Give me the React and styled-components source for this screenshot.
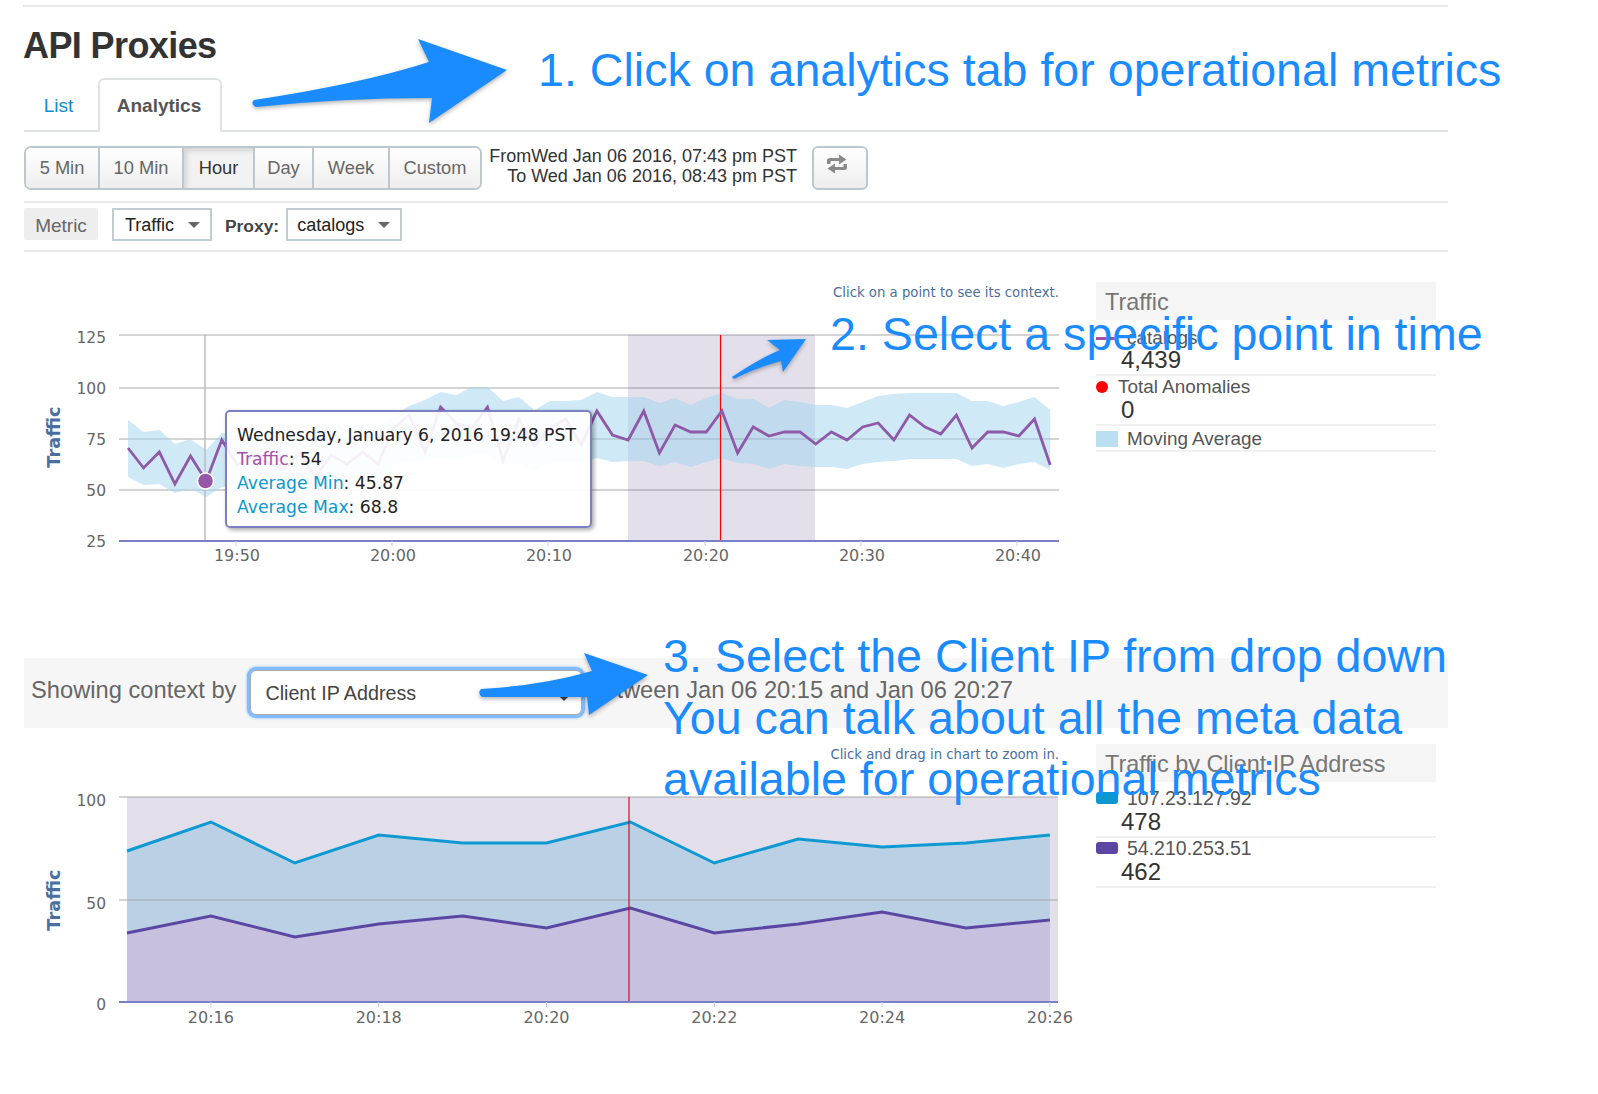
import React from 'react';
import styled, { createGlobalStyle } from 'styled-components';

const GlobalStyle = createGlobalStyle`
    html, body {
        margin: 0;
        padding: 0;
        background: #fff;
    }
    body {
        font-family: "Liberation Sans", Arial, sans-serif;
    }
`;

const Page = styled.div`
    position: relative;
    width: 1598px;
    height: 1094px;
    overflow: hidden;
`;

const Content = styled.div`
    width: 1424px;
    margin-left: 24px;
    padding-top: 5px;
`;

const Title = styled.h1`
    margin: 0;
    border-top: 2px solid #e8eaea;
    padding-top: 7px;
    margin-left: -1px;
    height: 64px;
    line-height: 63px;
    font-size: 36px;
    font-weight: 700;
    letter-spacing: -0.6px;
    color: #333;
`;

const Tabs = styled.div`
    display: flex;
    height: 52px;
    border-bottom: 2px solid #dfe2e2;
`;

const Tab = styled.div`
    box-sizing: border-box;
    height: ${(p) => (p.$active ? '54px' : '52px')};
    width: ${(p) => (p.$active ? '124px' : '74px')};
    padding-top: ${(p) => (p.$active ? '15px' : '17px')};
    padding-right: ${(p) => (p.$active ? '2px' : '5px')};
    text-align: center;
    font-size: 19px;
    font-weight: ${(p) => (p.$active ? 700 : 400)};
    color: ${(p) => (p.$active ? '#555' : '#0b8ecf')};
    background: #fff;
    border: ${(p) => (p.$active ? '2px solid #dfe2e2' : 'none')};
    border-bottom: none;
    border-radius: 6px 6px 0 0;
`;

const Toolbar = styled.div`
    display: flex;
    align-items: flex-start;
    height: 44px;
    padding: 14px 0 11px;
    border-bottom: 2px solid #e8eaea;
`;

const ButtonGroup = styled.div`
    display: flex;
    height: 44px;
    box-sizing: border-box;
    border: 2px solid #bcc8ce;
    border-radius: 7px;
    overflow: hidden;
`;

const RangeButton = styled.div`
    box-sizing: border-box;
    width: ${(p) => p.$w}px;
    line-height: 40px;
    text-align: center;
    font-size: 18.3px;
    color: ${(p) => (p.$active ? '#333' : '#666')};
    background: ${(p) => (p.$active ? '#f2f2f2' : 'linear-gradient(#fff, #eee)')};
    box-shadow: ${(p) => (p.$active ? 'inset 3px 3px 5px rgba(0,0,0,.12)' : 'none')};
    border-left: ${(p) => (p.$first ? 'none' : '2px solid #bcc8ce')};
    font-weight: ${(p) => (p.$active ? 500 : 400)};
`;

const DateRange = styled.div`
    width: 315px;
    padding-top: 1px;
    text-align: right;
    font-size: 18px;
    line-height: 19.5px;
    color: #333;
`;

const RefreshButton = styled.div`
    box-sizing: border-box;
    width: 56px;
    height: 44px;
    margin-left: 15px;
    padding: 6px 6px 0 0;
    text-align: center;
    border: 2px solid #bcc8ce;
    border-radius: 6px;
    background: linear-gradient(#fff, #eee);
`;

const FilterRow = styled.div`
    display: flex;
    align-items: flex-start;
    height: 33px;
    padding: 5px 0 9px;
    border-bottom: 2px solid #e8eaea;
`;

const MetricLabel = styled.div`
    width: 74px;
    height: 32px;
    line-height: 35px;
    text-align: center;
    font-size: 19px;
    color: #666;
    background: #eee;
    border-radius: 2px;
    margin-right: 14px;
`;

const SmallSelect = styled.div`
    box-sizing: border-box;
    display: flex;
    align-items: center;
    justify-content: space-between;
    width: ${(p) => p.$w}px;
    height: 33px;
    padding: 2px 10px 0 ${(p) => p.$left}px;
    border: 2px solid #c0cdd2;
    font-size: 18px;
    color: #222;
`;

const Caret = styled.span`
    width: 0;
    height: 0;
    margin-top: ${(p) => p.$y || 0}px;
    border-left: 6px solid transparent;
    border-right: 6px solid transparent;
    border-top: 6px solid ${(p) => p.$color || '#666'};
`;

const ProxyLabel = styled.div`
    margin: 0 7px 0 13px;
    line-height: 36px;
    font-size: 17.4px;
    font-weight: 700;
    color: #444;
`;

const ChartSection = styled.section`
    display: flex;
    height: ${(p) => p.$h}px;
    box-sizing: border-box;
    padding-top: ${(p) => p.$top}px;
`;

const ChartColumn = styled.div`
    width: 1072px;
`;

const Note = styled.div`
    height: 20px;
    line-height: 22px;
    width: 1035px;
    text-align: right;
    font-family: "DejaVu Sans", sans-serif;
    font-size: 13.25px;
    color: #4a6f9e;
`;

const ChartWrap = styled.div`
    position: relative;
`;

const ChartSvg = styled.svg`
    display: block;
    overflow: visible;
    font-family: "DejaVu Sans", sans-serif;
`;

const ChartTooltip = styled.div`
    position: absolute;
    left: 201px;
    top: 108px;
    box-sizing: border-box;
    width: 367px;
    height: 118px;
    padding: 11px 10px;
    background: rgba(255, 255, 255, 0.91);
    border: 2px solid #7b80c4;
    border-radius: 5px;
    box-shadow: 2px 2px 4px rgba(0, 0, 0, 0.35);
    font-family: "DejaVu Sans", sans-serif;
    font-size: 17.2px;
    line-height: 24px;
    color: #222;
    white-space: nowrap;
`;

const TipKey = styled.span`
    color: ${(p) => p.$color};
`;

const Legend = styled.aside`
    width: 340px;
`;

const LegendHeader = styled.div`
    height: 38px;
    line-height: 40px;
    padding-left: 9px;
    background: #f5f5f5;
    font-size: 23.4px;
    color: #777;
`;

const LegendRow = styled.div`
    padding: ${(p) => p.$top}px 0 ${(p) => p.$bottom}px;
    border-bottom: 2px solid #f0f0f0;
`;

const LegendLabel = styled.div`
    display: flex;
    align-items: center;
    height: 20px;
    font-size: ${(p) => p.$size}px;
    color: #555;
`;

const Swatch = styled.span`
    flex: none;
    width: ${(p) => p.$w}px;
    height: ${(p) => p.$h}px;
    margin-right: ${(p) => p.$gap}px;
    border-radius: ${(p) => p.$r || 0}px;
    background: ${(p) => p.$color};
`;

const LegendValue = styled.div`
    margin-top: ${(p) => p.$gap || 0}px;
    padding-left: 25px;
    height: 24px;
    line-height: 24px;
    font-size: 24px;
    color: #333;
`;

const ContextBar = styled.div`
    box-sizing: border-box;
    display: flex;
    align-items: center;
    height: 70px;
    padding: 0 0 6px 7px;
    background: #f6f6f6;
    font-size: 23.7px;
    color: #666;
    white-space: nowrap;
`;

const ClientSelect = styled.div`
    box-sizing: border-box;
    display: flex;
    align-items: center;
    justify-content: space-between;
    width: 332px;
    height: 45px;
    margin: 5px 5px 0 14px;
    padding: 2px 11px 0 14px;
    background: #fff;
    border: 1px solid #aaa;
    border-radius: 6px;
    box-shadow: 0 0 0 3px #82bbfb, 0 0 2px 4px rgba(130, 187, 251, 0.5);
    font-size: 19.7px;
    color: #444;
`;

const Overlay = styled.div`
    position: absolute;
    left: 0;
    top: 0;
    width: 1598px;
    height: 1094px;
    pointer-events: none;
`;

const Callout = styled.div`
    position: absolute;
    left: ${(p) => p.$x}px;
    top: ${(p) => p.$y}px;
    font-size: 46.6px;
    line-height: 61px;
    color: #1a8cff;
    white-space: nowrap;
`;

const ArrowSvg = styled.svg`
    position: absolute;
    left: 0;
    top: 0;
    filter: drop-shadow(0 2px 2px rgba(0, 0, 0, 0.3));
`;

const RANGES = [
    { label: '5 Min', w: 72 },
    { label: '10 Min', w: 84 },
    { label: 'Hour', w: 71, active: true },
    { label: 'Day', w: 59 },
    { label: 'Week', w: 76 },
    { label: 'Custom', w: 92 },
];

const TRAFFIC = [448, 468, 452, 484, 456, 481, 440, 465, 455, 463, 469, 453, 477, 455, 464, 452, 464, 428, 415, 452, 407, 423, 428, 407, 461, 419, 446, 428, 419, 445, 411, 435, 440, 411, 453, 425, 432, 432, 411, 453, 427, 436, 432, 432, 444, 432, 440, 427, 423, 440, 415, 427, 434, 415, 448, 432, 432, 436, 419, 465];
const AVG_TOP = [420, 432, 430, 444, 439, 450, 433, 435, 427, 432, 428, 430, 433, 423, 427, 423, 428, 415, 406, 400, 392, 395, 387, 387, 401, 397, 410, 401, 401, 400, 392, 397, 397, 397, 403, 398, 405, 398, 393, 399, 399, 408, 400, 402, 405, 405, 408, 402, 396, 394, 393, 393, 393, 393, 401, 401, 406, 402, 397, 410];
const AVG_BOTTOM = [477, 485, 484, 493, 489, 497, 487, 485, 480, 483, 480, 482, 487, 477, 478, 477, 480, 465, 462, 460, 458, 459, 455, 455, 464, 464, 471, 463, 463, 463, 458, 462, 461, 461, 466, 462, 467, 462, 458, 463, 464, 469, 464, 466, 467, 467, 469, 464, 462, 461, 459, 459, 459, 459, 466, 464, 468, 464, 462, 470];

const CLIENT_BLUE = [851, 822, 863, 835, 843, 843, 822, 863, 839, 847, 843, 835];
const CLIENT_PURPLE = [933, 916, 937, 924, 916, 928, 908, 933, 924, 912, 928, 920];

const minuteX = (i) => 128 + i * 15.63;
const contextX = (i) => 127 + i * 83.9;
const toPoints = (ys, xOf) => ys.map((y, i) => `${xOf(i).toFixed(1)},${y}`).join(' ');

function TrafficChart() {
    const band = toPoints(AVG_TOP, minuteX) + ' ' + toPoints(AVG_BOTTOM, minuteX).split(' ').reverse().join(' ');
    return (
        <ChartSvg width="1072" height="288" viewBox="24 302 1072 288">
            {[335, 388, 439, 490].map((y) => (
                <line key={y} x1="119" x2="1059" y1={y} y2={y} stroke="#c6c6c6" strokeWidth="1.6" />
            ))}
            <rect x="628" y="335" width="187" height="206" fill="#635296" opacity="0.18" />
            <polygon points={band} fill="#9fd4ee" opacity="0.5" />
            <line x1="205" x2="205" y1="335" y2="541" stroke="#bbb" strokeWidth="1.5" />
            <line x1="720.5" x2="720.5" y1="335" y2="541" stroke="#f00" strokeWidth="1.2" />
            <polyline points={toPoints(TRAFFIC, minuteX)} fill="none" stroke="#8e5aa8" strokeWidth="2.8" />
            <circle cx="205.5" cy="481" r="8" fill="#9557a8" stroke="#fff" strokeWidth="1.5" />
            <line x1="119" x2="1059" y1="541" y2="541" stroke="#7a80c8" strokeWidth="1.8" />
            {[236, 392, 548, 705, 861, 1017].map((x, i) => (
                <g key={x}>
                    <line x1={x} x2={x} y1="541" y2="546" stroke="#c5cbe8" />
                    <text x={x + 1} y="561" textAnchor="middle" fontSize="16" fill="#666">
                        {['19:50', '20:00', '20:10', '20:20', '20:30', '20:40'][i]}
                    </text>
                </g>
            ))}
            {[['125', 343], ['100', 394], ['75', 445], ['50', 496], ['25', 547]].map(([t, y]) => (
                <text key={t} x="106" y={y} textAnchor="end" fontSize="15.5" fill="#666">{t}</text>
            ))}
            <text transform="translate(60 437) rotate(-90)" textAnchor="middle" fontSize="17.8" fontWeight="700" fill="#4a6f9e">Traffic</text>
        </ChartSvg>
    );
}

function ContextChart() {
    const last = contextX(11).toFixed(1);
    const blueArea = `127,1002 ${toPoints(CLIENT_BLUE, contextX)} ${last},1002`;
    const purpleArea = `127,1002 ${toPoints(CLIENT_PURPLE, contextX)} ${last},1002`;
    return (
        <ChartSvg width="1072" height="276" viewBox="24 764 1072 276">
            <rect x="127" y="797" width="931" height="205" fill="#e2dfeb" />
            <polygon points={blueArea} fill="#bad1e5" />
            <polygon points={purpleArea} fill="#c7c0df" />
            {[797, 900].map((y) => (
                <line key={y} x1="119" x2="1058" y1={y} y2={y} stroke="#a8a8a8" strokeOpacity="0.65" strokeWidth="1.6" />
            ))}
            <polyline points={toPoints(CLIENT_BLUE, contextX)} fill="none" stroke="#0f99d2" strokeWidth="3" />
            <polyline points={toPoints(CLIENT_PURPLE, contextX)} fill="none" stroke="#5b47a3" strokeWidth="3" />
            <line x1="629" x2="629" y1="797" y2="1002" stroke="#c8102e" strokeWidth="1.2" />
            <line x1="119" x2="1058" y1="1002" y2="1002" stroke="#7a80c8" strokeWidth="1.8" />
            {['20:16', '20:18', '20:20', '20:22', '20:24', '20:26'].map((t, i) => (
                <g key={t}>
                    <line x1={contextX(i * 2 + 1)} x2={contextX(i * 2 + 1)} y1="1002" y2="1007" stroke="#c5cbe8" />
                    <text x={contextX(i * 2 + 1)} y="1023" textAnchor="middle" fontSize="16" fill="#666">{t}</text>
                </g>
            ))}
            {[['100', 806], ['50', 909], ['0', 1010]].map(([t, y]) => (
                <text key={t} x="106" y={y} textAnchor="end" fontSize="15.5" fill="#666">{t}</text>
            ))}
            <text transform="translate(60 900) rotate(-90)" textAnchor="middle" fontSize="17.8" fontWeight="700" fill="#4a6f9e">Traffic</text>
        </ChartSvg>
    );
}

function RefreshIcon() {
    return (
        <svg width="20" height="20" viewBox="0 0 20 20" fill="#8a8a8a">
            <path d="M0 10V6.5Q0 4 3 4H12V0.5L19.5 5.5L12 10.5V7H3.5V10Z" />
            <path d="M20 10V13.5Q20 16 17 16H8V19.5L0.5 14.5L8 9.5V13H16.5V10Z" />
        </svg>
    );
}

function Arrows() {
    return (
        <ArrowSvg width="1598" height="1094" viewBox="0 0 1598 1094">
            <path fill="#1a8cff" d="M254 100Q360 84 429 62L418 39L507 70L429 123L432 98Q340 98 256 107Q250 104 254 100Z" />
            <path fill="#1a8cff" d="M732 377Q760 358 780 350L767 340L806 339L783 372L781 361Q755 368 734 379Z" />
            <path fill="#1a8cff" d="M481 689Q540 686 592 671L584 653L648 675L589 715L587 697Q530 697 482 697Q477 693 481 689Z" />
        </ArrowSvg>
    );
}

export default function App() {
    return (
        <Page>
            <GlobalStyle />
            <Content>
                <Title>API Proxies</Title>
                <Tabs>
                    <Tab>List</Tab>
                    <Tab $active>Analytics</Tab>
                </Tabs>
                <Toolbar>
                    <ButtonGroup>
                        {RANGES.map((r, i) => (
                            <RangeButton key={r.label} $w={r.w} $active={r.active} $first={i === 0}>{r.label}</RangeButton>
                        ))}
                    </ButtonGroup>
                    <DateRange>
                        <div>FromWed Jan 06 2016, 07:43 pm PST</div>
                        <div>To Wed Jan 06 2016, 08:43 pm PST</div>
                    </DateRange>
                    <RefreshButton><RefreshIcon /></RefreshButton>
                </Toolbar>
                <FilterRow>
                    <MetricLabel>Metric</MetricLabel>
                    <SmallSelect $w={100} $left={11}>Traffic<Caret $y={-2} /></SmallSelect>
                    <ProxyLabel>Proxy:</ProxyLabel>
                    <SmallSelect $w={116} $left={9}>catalogs<Caret $y={-2} /></SmallSelect>
                </FilterRow>
                <ChartSection $h={406} $top={30}>
                    <ChartColumn>
                        <Note>Click on a point to see its context.</Note>
                        <ChartWrap>
                            <TrafficChart />
                            <ChartTooltip>
                                <div>Wednesday, January 6, 2016 19:48 PST</div>
                                <div><TipKey $color="#a64ea9">Traffic</TipKey>: 54</div>
                                <div><TipKey $color="#0b98d0">Average Min</TipKey>: 45.87</div>
                                <div><TipKey $color="#0b98d0">Average Max</TipKey>: 68.8</div>
                            </ChartTooltip>
                        </ChartWrap>
                    </ChartColumn>
                    <Legend>
                        <LegendHeader>Traffic</LegendHeader>
                        <LegendRow $top={8} $bottom={2}>
                            <LegendLabel $size={18.9}><Swatch $w={20} $h={3} $gap={11} $color="#a64ea9" />catalogs</LegendLabel>
                            <LegendValue>4,439</LegendValue>
                        </LegendRow>
                        <LegendRow $top={1} $bottom={2}>
                            <LegendLabel $size={18.9}><Swatch $w={12} $h={12} $r={6} $gap={10} $color="#f00" />Total Anomalies</LegendLabel>
                            <LegendValue $gap={1}>0</LegendValue>
                        </LegendRow>
                        <LegendRow $top={3} $bottom={1}>
                            <LegendLabel $size={18.9}><Swatch $w={22} $h={16} $gap={9} $color="#b9dff0" />Moving Average</LegendLabel>
                        </LegendRow>
                    </Legend>
                </ChartSection>
                <ContextBar>
                    Showing context by
                    <ClientSelect>Client IP Address<Caret $y={8} $color="#444" /></ClientSelect>
                    Between Jan 06 20:15 and Jan 06 20:27
                </ContextBar>
                <ChartSection $h={320} $top={16}>
                    <ChartColumn>
                        <Note>Click and drag in chart to zoom in.</Note>
                        <ChartWrap>
                            <ContextChart />
                        </ChartWrap>
                    </ChartColumn>
                    <Legend>
                        <LegendHeader>Traffic by Client IP Address</LegendHeader>
                        <LegendRow $top={6} $bottom={2}>
                            <LegendLabel $size={19.5}><Swatch $w={22} $h={12} $r={3} $gap={9} $color="#0b98d0" />107.23.127.92</LegendLabel>
                            <LegendValue $gap={2}>478</LegendValue>
                        </LegendRow>
                        <LegendRow $top={0} $bottom={2}>
                            <LegendLabel $size={19.5}><Swatch $w={22} $h={12} $r={3} $gap={9} $color="#5b47a3" />54.210.253.51</LegendLabel>
                            <LegendValue $gap={2}>462</LegendValue>
                        </LegendRow>
                    </Legend>
                </ChartSection>
            </Content>
            <Overlay>
                <Arrows />
                <Callout $x={538} $y={40}>1. Click on analytics tab for operational metrics</Callout>
                <Callout $x={830} $y={304}>2. Select a specific point in time</Callout>
                <Callout $x={663} $y={626}>3. Select the Client IP from drop down</Callout>
                <Callout $x={663} $y={688}>You can talk about all the meta data</Callout>
                <Callout $x={663} $y={749}>available for operational metrics</Callout>
            </Overlay>
        </Page>
    );
}
